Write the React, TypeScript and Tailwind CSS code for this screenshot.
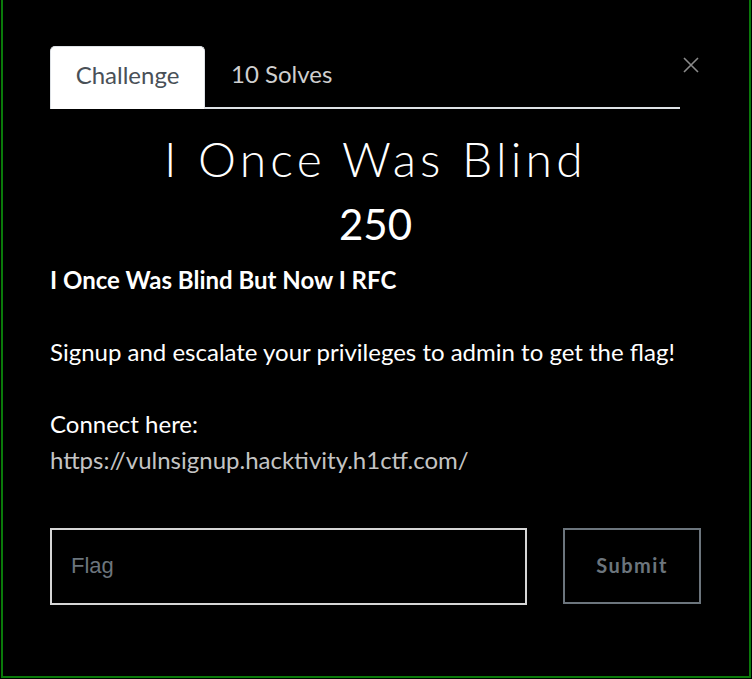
import React from "react";

export default function App() {
  return (
    <div className="w-[752px] h-[679px] bg-black overflow-hidden" style={{ fontFamily: "Lato, 'Noto Sans', sans-serif" }}>
      <div className="ml-px w-[750px] h-[678px] border-x-2 border-b-2 border-[#0a7a0a] bg-black pl-[47px] pr-[48px]">
        {/* header: tabs + close */}
        <div className="flex items-start pt-[46px]">
          <ul className="flex w-[630px] border-b-2 border-[#dee2e6]">
            <li className="w-[155px] h-[63px] -mb-[2px] pb-[6px] flex items-center justify-center rounded-t-[5px] bg-white border border-[#dee2e6] border-b-0 text-[24px] text-[#495057]">
              Challenge
            </li>
            <li className="h-[61px] pb-[6px] flex items-center pl-[26px] text-[24px] text-[#cfcfcf]">
              10 Solves
            </li>
          </ul>
          <button className="ml-[2px] mt-[10px] w-[18px] h-[18px] flex items-center justify-center">
            <svg width="16" height="16" viewBox="0 0 16 16">
              <path d="M1 1 L15 15 M15 1 L1 15" stroke="#8a8a8a" strokeWidth="1.6" />
            </svg>
          </button>
        </div>

        <h2 className="mt-[21px] text-center text-[48px] leading-[1.2] font-light text-white tracking-[4.2px]">
          I Once Was Blind
        </h2>
        <h3 className="mt-[11px] text-center text-[42px] leading-[1.2] text-white">250</h3>

        <div className="mt-[13px] text-[24px] leading-[36px] text-white">
          <p className="font-bold">I Once Was Blind But Now I RFC</p>
          <p className="mt-[36px]">Signup and escalate your privileges to admin to get the flag!</p>
          <p className="mt-[36px]">Connect here:</p>
          <p className="text-[#c4c4c4]">https://vulnsignup.hacktivity.h1ctf.com/</p>
        </div>

        <div className="mt-[50px] flex items-start">
          <input
            className="w-[477px] h-[77px] border-2 border-[#d6d6d6] bg-black px-[19px] text-[22px] text-white placeholder:text-[#6c757d] outline-none"
            style={{ fontFamily: "'Liberation Sans', Arial, sans-serif" }}
            placeholder="Flag"
          />
          <button className="ml-[36px] w-[138px] h-[76px] pb-[2px] border-2 border-[#6c757d] bg-black text-[20px] font-bold tracking-[1.5px] text-[#6c757d]">
            Submit
          </button>
        </div>
      </div>
    </div>
  );
}
